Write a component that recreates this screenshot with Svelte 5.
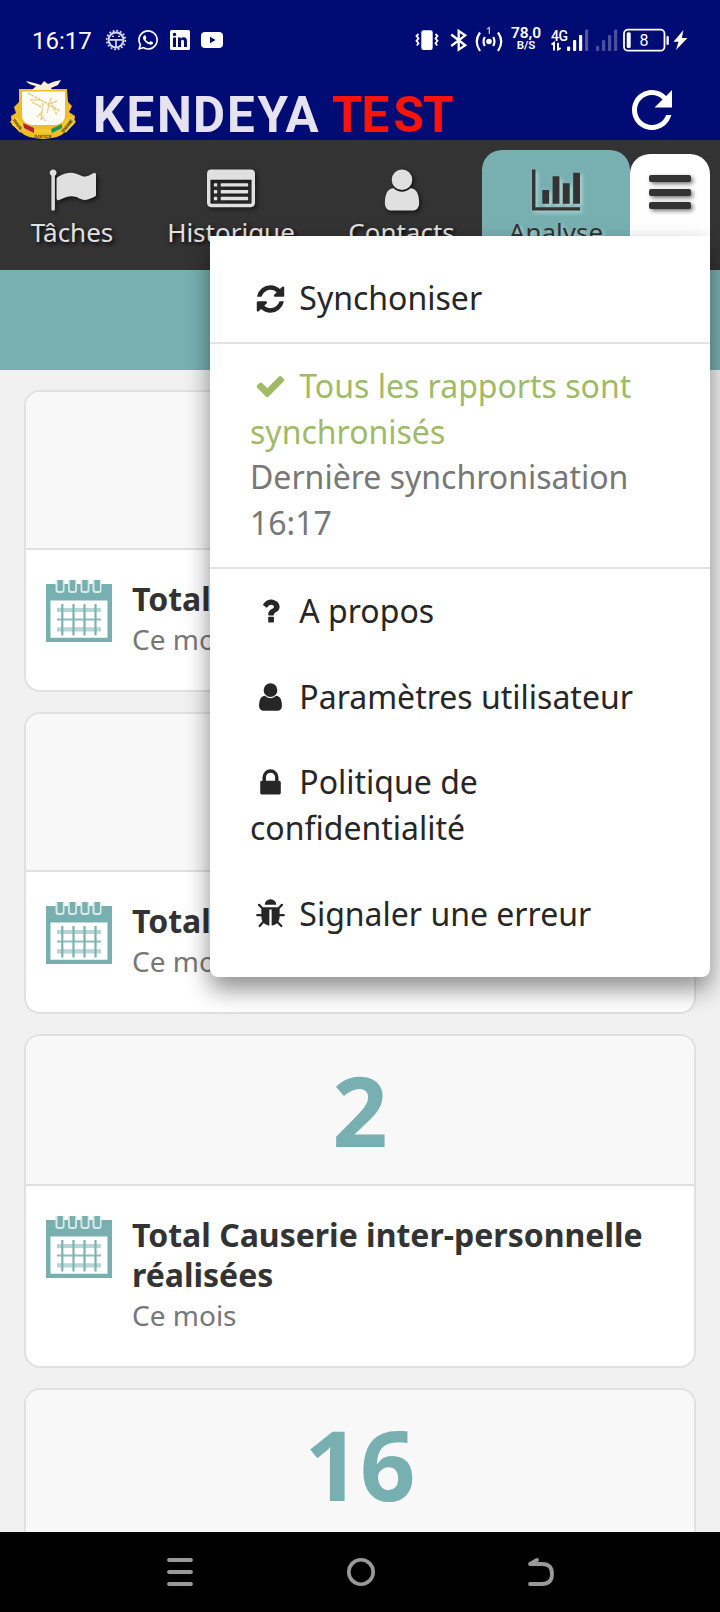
<script>
  const glyphs = {
    refresh:
      'M1639 1056q0 5-1 7-64 268-268 434.500t-478 166.500q-146 0-282.500-55t-243.500-157l-129 129q-19 19-45 19t-45-19-19-45v-448q0-26 19-45t45-19h448q26 0 45 19t19 45-19 45l-137 137q71 66 161 102t187 36q134 0 250-65t186-179q11-17 53-117 8-23 30-23h192q13 0 22.500 9.500t9.500 22.500zm25-800v448q0 26-19 45t-45 19h-448q-26 0-45-19t-19-45 19-45l138-138q-148-137-349-137-134 0-250 65t-186 179q-11 17-53 117-8 23-30 23h-199q-13 0-22.500-9.500t-9.500-22.500v-7q65-268 270-434.500t480-166.500q146 0 284 55.500t245 156.500l130-129q19-19 45-19t45 19 19 45z',
    check:
      'M1671 566q0 40-28 68l-724 724-136 136q-28 28-68 28t-68-28l-136-136-362-362q-28-28-28-68t28-68l136-136q28-28 68-28t68 28l294 295 656-657q28-28 68-28t68 28l136 136q28 28 28 68z',
    question:
      'M1088 1256v240q0 16-12 28t-28 12h-240q-16 0-28-12t-12-28v-240q0-16 12-28t28-12h240q16 0 28 12t12 28zm316-600q0 54-15.500 101t-35 76.500-55 59.500-57.500 43.500-61 35.500q-41 23-68.500 65t-27.500 67q0 17-12 32.500t-28 15.500h-240q-15 0-25.500-18.500t-10.500-37.500v-45q0-83 65-156.500t143-108.500q59-27 84-56t25-76q0-42-46.500-74t-107.500-32q-65 0-108 29-35 25-107 115-13 16-31 16-12 0-25-8l-164-125q-13-10-15.500-25t5.500-28q160-266 464-266 80 0 161 31t146 83 106 127.500 41 158.500z',
    user:
      'M1536 1399q0 109-62.500 187t-150.500 78h-854q-88 0-150.500-78t-62.500-187q0-85 8.500-160.500t31.500-152 58.500-131 94-89 134.500-34.500q131 128 313 128t313-128q76 0 134.500 34.500t94 89 58.500 131 31.500 152 8.500 160.500zm-256-887q0 159-112.500 271.500t-271.500 112.500-271.500-112.500-112.500-271.500 112.500-271.500 271.500-112.500 271.500 112.500 112.500 271.500z',
    lock:
      'M640 768h512v-192q0-106-75-181t-181-75-181 75-75 181v192zm832 96v576q0 40-28 68t-68 28h-960q-40 0-68-28t-28-68v-576q0-40 28-68t68-28h32v-192q0-184 132-316t316-132 316 132 132 316v192h32q40 0 68 28t28 68z',
    bug:
      'M1696 960q0 26-19 45t-45 19h-224q0 171-67 290l208 209q19 19 19 45t-19 45q-18 19-45 19t-45-19l-198-197q-5 5-15 13t-42 28.500-65 36.500-82 29-97 13v-896h-128v896q-51 0-101.500-13.500t-87-33-66-39-43.500-32.500l-15-14-183 207q-20 21-48 21-24 0-43-16-19-18-20.500-44.500t15.500-46.500l202-227q-58-114-58-274h-224q-26 0-45-19t-19-45 19-45 45-19h224v-294l-173-173q-19-19-19-45t19-45 45-19 45 19l173 173h844l173-173q19-19 45-19t45 19 19 45-19 45l-173 173v294h224q26 0 45 19t19 45zm-480-576h-640q0-133 93.500-226.500t226.500-93.500 226.500 93.500 93.500 226.500z',
    flag:
      'M320 256q0 72-64 110v1266q0 13-9.500 22.500t-22.500 9.500h-64q-13 0-22.500-9.500t-9.500-22.500v-1266q-64-38-64-110 0-53 37.500-90.500t90.500-37.500 90.500 37.500 37.500 90.500zm1472 64v763q0 25-12.500 38.500t-39.500 27.500q-215 116-369 116-61 0-123.500-22t-108.500-48-115.500-48-142.500-22q-192 0-464 146-17 9-33 9-26 0-45-19t-19-45v-742q0-32 31-55 21-14 79-43 236-120 421-120 107 0 200 29t219 88q38 19 88 19 54 0 117.500-21t110-47 88-47 54.500-21q26 0 45 19t19 45z',
    list:
      'M160 128H1632Q1792 128 1792 288V1376Q1792 1536 1632 1536H160Q0 1536 0 1376V288Q0 128 160 128zM128 512V1376Q128 1408 160 1408H1632Q1664 1408 1664 1376V512zM288 640h64q32 0 32 32v64q0 32-32 32h-64q-32 0-32-32v-64q0-32 32-32zM288 896h64q32 0 32 32v64q0 32-32 32h-64q-32 0-32-32v-64q0-32 32-32zM288 1152h64q32 0 32 32v64q0 32-32 32h-64q-32 0-32-32v-64q0-32 32-32zM544 640h960q32 0 32 32v64q0 32-32 32h-960q-32 0-32-32v-64q0-32 32-32zM544 896h960q32 0 32 32v64q0 32-32 32h-960q-32 0-32-32v-64q0-32 32-32zM544 1152h960q32 0 32 32v64q0 32-32 32h-960q-32 0-32-32v-64q0-32 32-32z',
    chart:
      'M640 896v512h-256v-512h256zm384-512v1024h-256v-1024h256zm1024 1152v128h-2048v-1536h128v1408h1920zm-640-896v768h-256v-768h256zm384-384v1152h-256v-1152h256z'
  };

  const tabs = [
    { label: 'Tâches', icon: 'flag' },
    { label: 'Historique', icon: 'list' },
    { label: 'Contacts', icon: 'user' },
    { label: 'Analyse', icon: 'chart', active: true }
  ];

  const cards = [
    { value: '', title: 'Total', period: 'Ce mois', tall: true },
    { value: '', title: 'Total', period: 'Ce mois', tall: true },
    { value: '2', title: 'Total Causerie inter-personnelle réalisées', period: 'Ce mois' },
    { value: '16', title: '', period: '' }
  ];

  const actions = [
    { label: 'A propos', icon: 'question' },
    { label: 'Paramètres utilisateur', icon: 'user' },
    { label: 'Politique de confidentialité', icon: 'lock' },
    { label: 'Signaler une erreur', icon: 'bug' }
  ];
</script>

{#snippet fa(name)}
  <svg class="fa" viewBox="0 0 1792 1792"><path d={glyphs[name]} fill="currentColor" fill-rule={name === 'list' ? 'evenodd' : 'nonzero'} /></svg>
{/snippet}

{#snippet calendar()}
  <svg class="calendar" width="66" height="62" viewBox="0 0 66 62">
    <path d="M0 4H66V62H0z" fill="#78b0b1" />
    <path d="M4.500 20.500H61.500V57.800H4.500z" fill="#fff" />
    <g fill="#d9eaea">
      <rect x="9.500" y="-4" width="9" height="17" rx="3" />
      <rect x="22" y="-4" width="9" height="17" rx="3" />
      <rect x="34.500" y="-4" width="9" height="17" rx="3" />
      <rect x="46.500" y="-4" width="9" height="17" rx="3" />
    </g>
    <g fill="#78b0b1">
      <rect x="11.500" y="-4" width="5.400" height="15" rx="1.500" />
      <rect x="23.800" y="-4" width="5.400" height="15" rx="1.500" />
      <rect x="36.300" y="-4" width="5.400" height="15" rx="1.500" />
      <rect x="48.500" y="-4" width="5.400" height="15" rx="1.500" />
    </g>
    <g stroke="#b7d5d6" stroke-width="4.200"><path d="M11 30H55M11 49.300H55" /></g>
    <path d="M11 39.600H55" stroke="#8dbcbd" stroke-width="2" />
    <path d="M16.300 24V55.500M27.500 24V55.500M38.500 24V55.500M49.500 24V55.500" stroke="#7db2b3" stroke-width="2.200" />
  </svg>
{/snippet}

<div class="screen">
  <div class="status">
    <span class="time">16:17</span>
    <svg class="s-gear" width="22" height="22" viewBox="0 0 22 22" fill="none" stroke="#d4d6ee">
      <circle cx="11" cy="11" r="9.300" stroke-width="1.800" stroke-dasharray="1.900 1.750" />
      <circle cx="11" cy="11" r="7.400" stroke-width="2" />
      <path d="M4.500 10.800H17.500M11 11V18" stroke-width="1.700" />
      <path d="M7 7.300h2M13 7.300h2" stroke-width="1.200" />
    </svg>
    <svg class="s-wa" width="24" height="24" viewBox="0 0 24 24"><path fill="#fff" d="M12.040 2c-5.460 0-9.910 4.450-9.910 9.910 0 1.750.46 3.450 1.320 4.950L2.050 22l5.250-1.380c1.450.79 3.080 1.210 4.740 1.210 5.460 0 9.910-4.450 9.910-9.910 0-2.650-1.030-5.140-2.900-7.010A9.816 9.816 0 0 0 12.040 2m.01 1.670c2.200 0 4.260.86 5.820 2.420a8.225 8.225 0 0 1 2.410 5.830c0 4.540-3.700 8.230-8.240 8.230-1.480 0-2.930-.39-4.190-1.150l-.3-.17-3.120.82.83-3.040-.2-.32a8.188 8.188 0 0 1-1.260-4.380c.01-4.540 3.700-8.240 8.250-8.240M8.530 7.330c-.16 0-.43.06-.66.31-.22.25-.87.86-.87 2.070 0 1.220.89 2.390 1 2.560.14.17 1.760 2.670 4.250 3.730.59.27 1.050.42 1.410.53.59.19 1.130.16 1.560.1.48-.07 1.460-.6 1.670-1.180.21-.58.21-1.070.15-1.180-.07-.1-.23-.16-.48-.27-.25-.14-1.470-.74-1.690-.82-.23-.08-.37-.12-.56.12-.16.25-.64.81-.78.97-.15.17-.29.19-.53.07-.26-.13-1.060-.39-2-1.230-.74-.66-1.230-1.470-1.380-1.720-.12-.24-.01-.39.11-.5.11-.11.27-.29.37-.44.13-.14.17-.25.25-.41.08-.17.04-.31-.02-.43-.06-.11-.56-1.350-.77-1.840-.2-.48-.4-.42-.56-.43-.14 0-.3-.01-.47-.01z" /></svg>
    <svg class="s-in" width="20" height="20" viewBox="0 0 20 20">
      <rect width="20" height="20" rx="1.500" fill="#fff" />
      <path d="M3 7.500h3V17H3zM4.500 2.800a1.750 1.750 0 1 1 0 3.500a1.750 1.750 0 1 1 0-3.500zM8 7.500h2.800v1.300c.6-1 1.600-1.550 2.800-1.550c2.700 0 3.400 1.700 3.400 4.200V17h-3v-4.900c0-1.200-.1-2.400-1.500-2.400s-1.500 1.200-1.500 2.400V17H8z" fill="#000b73" />
    </svg>
    <svg class="s-yt" width="22" height="16" viewBox="0 0 22 16"><rect width="22" height="16" rx="4" fill="#fff" /><path d="M9 4.700L14.500 8L9 11.300z" fill="#000b73" /></svg>

    <div class="system">
      <svg width="24" height="28" viewBox="0 0 24 28" fill="none" stroke="#fff" stroke-width="1.800">
        <rect x="6.300" y="4.300" width="11.400" height="19.600" rx="2.200" fill="#fff" stroke="none" />
        <path d="M3.500 8L1.500 10L3.500 12.500L1.500 14.800L3.500 17.200L1.800 19.500M20.500 8L22.500 10L20.500 12.500L22.500 14.800L20.500 17.200L22.200 19.500" />
      </svg>
      <svg class="s-bt" width="18" height="28" viewBox="0 0 18 28" fill="none" stroke="#fff" stroke-width="2.300"><path d="M1.200 8.500L15.200 19.300L8.700 23.600V5L15.200 9.300L1.200 20" /></svg>
      <svg class="s-hot" width="28" height="28" viewBox="0 0 28 28" fill="none" stroke="#fff" stroke-width="2.200">
        <circle cx="14" cy="15.500" r="2.800" fill="#fff" stroke="none" />
        <path d="M9.800 11Q7.300 15.500 9.800 20M18.200 11Q20.700 15.500 18.200 20M5 6.500Q-1.500 15.500 5 25M23 6.500Q29.500 15.500 23 25" />
        <path d="M12 3L14.300 1.700V8" stroke="#b9bce0" stroke-width="1.300" />
      </svg>
      <div class="speed"><b>78,0</b><small>B/S</small></div>
      <svg class="s-sig" width="38" height="28" viewBox="0 0 38 28">
        <text x="0" y="14.500" font-family="Roboto, sans-serif" font-size="14" font-weight="500" fill="#fff" textLength="17">4G</text>
        <path d="M.500 18.500L3 16.800V24.500M7 16.800V23.500L9.700 22" fill="none" stroke="#fff" stroke-width="2" />
        <g fill="#fff"><rect x="16" y="20.500" width="3.200" height="4.500" rx="1" /><rect x="22" y="14" width="3.200" height="11" rx="1" /><rect x="28" y="9" width="3.200" height="16" rx="1" /></g>
        <rect x="34" y="3.500" width="3.200" height="21.500" rx="1" fill="#5258a0" />
      </svg>
      <svg class="s-sig2" width="22" height="28" viewBox="0 0 22 28" fill="#4a509b"><rect x="0" y="20" width="3.200" height="5" rx="1" /><rect x="6" y="14" width="3.200" height="11" rx="1" /><rect x="12" y="9" width="3.200" height="16" rx="1" /><rect x="18" y="3.500" width="3.200" height="21.500" rx="1" /></svg>
      <svg class="s-bat" width="66" height="28" viewBox="0 0 66 28">
        <rect x="1" y="3.700" width="40.500" height="21" rx="4" fill="none" stroke="#fff" stroke-width="1.800" />
        <rect x="3.700" y="6.300" width="4" height="15.800" rx="1.500" fill="#fff" />
        <rect x="43.500" y="10" width="2.300" height="9" rx="1" fill="#fff" />
        <text x="21" y="19.500" font-family="Roboto, sans-serif" font-size="16" fill="#fff" text-anchor="middle">8</text>
        <path d="M60.500 4L50.500 15.800H55.500L53 24L64.500 12H58.800z" fill="#fff" />
      </svg>
    </div>
  </div>

  <header>
    <svg class="emblem" width="66" height="60" viewBox="0 0 66 60">
      <path d="M9 9H57L58 22L62 26L59 32L65 36L64 44L54 53Q50 58 33 59Q16 58 12 53L2 45L1 36L6 33L4 27L9 22z" fill="#efbd27" />
      <path d="M3 39L13 50M63 39L53 50" stroke="#f7cb2c" stroke-width="8" />
      <path d="M12 11.500H55V35Q55 43 46 45H21Q12 43 12 35z" fill="#fffdf7" />
      <path d="M13 43L24 48V53L14 48z" fill="#b91f35" />
      <path d="M25 49H42V53H25z" fill="#f8c92e" />
      <path d="M41 49L52 44V48L42 53z" fill="#16965f" />
      <path d="M16 1Q25 3 31 5L34 1L38 4Q44 1 51 0L48 5L41 8L42 10H22L26 6Q19 5 16 1z" fill="#f7f0d5" />
      <path d="M18 13L40 25L50 31M33 23L31 40M41 18L37 33M22 22L31 27M47 21L37 25M31 33L27 37M32 37L36 41M42 25L47 35M20 20L32 20" fill="none" stroke="#e8cf86" stroke-width="1.700" stroke-dasharray="3 .7" />
      <g font-family="Liberation Sans, sans-serif" font-size="4.200" font-weight="700" fill="#4b3b0b">
        <text x="23.500" y="57.500" textLength="18">JUSTICE</text>
        <text transform="translate(2 40) rotate(52)" textLength="14">TRAVAIL</text>
        <text transform="translate(53 53) rotate(-50)" textLength="16">SOLIDARITÉ</text>
      </g>
    </svg>
    <svg class="brand" width="370" height="60" viewBox="0 0 370 60" font-family="Roboto, sans-serif" font-size="49.300" font-weight="700">
      <text x="-3 30.500 61 97 131 161.500 189.500" y="52" fill="#e6e2f0">KENDEYA</text>
      <text x="236 265.500 297.500 327" y="52" fill="#ff1308">TEST</text>
    </svg>
    <svg class="reload" width="60" height="60" viewBox="0 0 24 24"><path fill="#fff" d="M17.650 6.350C16.200 4.900 14.210 4 12 4c-4.420 0-7.990 3.580-7.990 8s3.570 8 7.990 8c3.730 0 6.840-2.550 7.730-6h-2.080c-.82 2.330-3.040 4-5.650 4-3.310 0-6-2.690-6-6s2.690-6 6-6c1.660 0 3.140.69 4.220 1.780L13 11h7V4l-2.350 2.350z" /></svg>
  </header>

  <nav>
    {#each tabs as tab}
      <div class="tab" class:active={tab.active}>
        {@render fa(tab.icon)}
        <span>{tab.label}</span>
      </div>
    {/each}
    <div class="burger"><i></i><i></i><i></i></div>
    <div class="menu">
      <section class="first"><p>{@render fa('refresh')} Synchoniser</p></section>
      <section class="sync">
        <p class="ok">{@render fa('check')} Tous les rapports sont synchronisés</p>
        <p class="muted">Dernière synchronisation 16:17</p>
      </section>
      <section class="actions">
        {#each actions as a}<p>{@render fa(a.icon)} {a.label}</p>{/each}
      </section>
    </div>
  </nav>

  <div class="filter"></div>

  <main>
    {#each cards as card}
      <article>
        <div class="value" class:tall={card.tall}>{card.value}</div>
        <div class="body">
          {@render calendar()}
          <div>
            <h2>{card.title}</h2>
            <p>{card.period}</p>
          </div>
        </div>
      </article>
    {/each}
  </main>

  <footer>
    <svg width="26" height="28" viewBox="0 0 26 28" stroke="#999" stroke-width="3.800" stroke-linecap="round"><path d="M2 2H24M2 14H24M2 26H24" /></svg>
    <svg width="28" height="28" viewBox="0 0 28 28"><circle cx="14" cy="14" r="12.200" fill="none" stroke="#999" stroke-width="3.600" /></svg>
    <svg width="26" height="28" viewBox="0 0 26 28" fill="none" stroke="#999" stroke-width="3.800" stroke-linecap="round" stroke-linejoin="round"><path d="M2 26H14Q24 26 24 16T14 6H2L9 2" /></svg>
  </footer>
</div>

<style>
  :global(body) { margin: 0; }
  .screen {
    width: 720px;
    height: 1612px;
    overflow: hidden;
    display: flex;
    flex-direction: column;
    background: #f1f1f1;
    color: #333;
    font-family: "Noto Sans", sans-serif;
  }
  svg { display: block; flex: none; }

  .status {
    height: 80px;
    flex: none;
    background: #000b73;
    color: #fff;
    display: flex;
    align-items: center;
    padding-left: 32px;
    box-sizing: border-box;
    font-family: Roboto, sans-serif;
  }
  .time { font-size: 24px; width: 73px; line-height: 28px; padding-top: 1px; }
  .s-wa { margin-left: 9px; }
  .s-in { margin-left: 10px; }
  .s-yt { margin-left: 11px; }
  .system { display: flex; margin-left: 192px; align-items: flex-start; height: 28px; }
  .s-bt { margin-left: 11px; }
  .s-hot { margin-left: 7px; }
  .speed { width: 30px; margin-left: 8px; display: flex; flex-direction: column; align-items: center; white-space: nowrap; }
  .speed b { font-size: 15.500px; line-height: 14px; font-weight: 600; }
  .speed small { font-size: 11.500px; line-height: 11px; font-weight: 600; }
  .s-sig { margin-left: 10px; }
  .s-sig2 { margin-left: 7px; }
  .s-bat { margin-left: 5px; }

  header { height: 60px; flex: none; background: #000b73; display: flex; padding-left: 10px; }
  .brand { margin-left: 20px; }
  .reload { margin-left: 156px; }

  nav {
    position: relative;
    z-index: 2;
    height: 130px;
    flex: none;
    background: #333;
    display: grid;
    grid-template-columns: 144px 174px 164px 148px 80px;
  }
  .tab {
    margin-top: 10px;
    display: flex;
    flex-direction: column;
    align-items: center;
    padding-top: 15.600px;
    color: #e0e0e0;
    text-shadow: 2px 2px 4px #000;
    font-size: 26px;
  }
  .tab:nth-child(3) { padding-left: 3px; }
  .tab .fa { width: 48px; height: 48px; filter: drop-shadow(2px 2px 2px rgba(0, 0, 0, .6)); }
  .tab span { line-height: 36px; margin-top: .9px; }
  .tab.active { background: #78b0b1; color: #333; border-radius: 20px 20px 0 0; text-shadow: 2px 2px 4px #b9dcdc; }
  .tab.active .fa { filter: drop-shadow(2px 2px 2px rgba(210, 235, 235, .7)); }
  .burger {
    margin-top: 14px;
    background: #fff;
    border-radius: 20px 20px 0 0;
    display: flex;
    flex-direction: column;
    align-items: center;
    gap: 6.700px;
    padding-top: 21px;
  }
  .burger i { width: 41.500px; height: 7px; border-radius: 2px; background: #333; box-shadow: 2px 2px 4px rgba(0, 0, 0, .55); }

  .menu {
    position: absolute;
    left: 210px;
    top: 96px;
    width: 500px;
    height: 741px;
    box-sizing: border-box;
    background: #fff;
    border-radius: 0 0 8px 8px;
    box-shadow: 0 12px 24px rgba(0, 0, 0, .45);
    color: #262626;
    font-size: 32px;
    line-height: 45.714px;
  }
  .menu section { box-sizing: border-box; padding: 18.800px 40px 0; }
  .menu .first { height: 108px; padding-top: 39px; border-bottom: 2px solid #e2e2e2; }
  .menu .sync { height: 225px; border-bottom: 2px solid #e2e2e2; }
  .menu p { margin: 0; }
  .menu .fa { display: inline-block; width: 41px; height: 32px; vertical-align: -4.570px; }
  .ok { color: #a0ba67; }
  .muted { color: #777; }
  .actions p + p { margin-top: 40px; }

  .filter { height: 100px; flex: none; background: #78b0b1; }

  main { flex: 1; min-height: 0; overflow: hidden; padding: 20px 24px 0; display: flex; flex-direction: column; gap: 20px; }
  article { flex: none; border: 2px solid #e0e0e0; border-radius: 16px; background: #fff; overflow: hidden; }
  .value {
    box-sizing: border-box;
    height: 150px;
    border-bottom: 2px solid #e0e0e0;
    background: #f8f8f8;
    color: #78b0b1;
    font-size: 97px;
    font-weight: 700;
    line-height: 146px;
    text-align: center;
  }
  .value.tall { height: 158px; }
  .body { display: flex; gap: 20px; padding: 29px 20px 31px; }
  .calendar { margin-top: 1px; }
  h2 { margin: 0; font-size: 32px; line-height: 40px; font-weight: 700; }
  .body p { margin: 0; font-size: 28px; line-height: 40px; color: #777; }

  footer { height: 80px; flex: none; background: #000; display: flex; align-items: center; justify-content: space-between; padding: 0 166px 0 167px; }
</style>
